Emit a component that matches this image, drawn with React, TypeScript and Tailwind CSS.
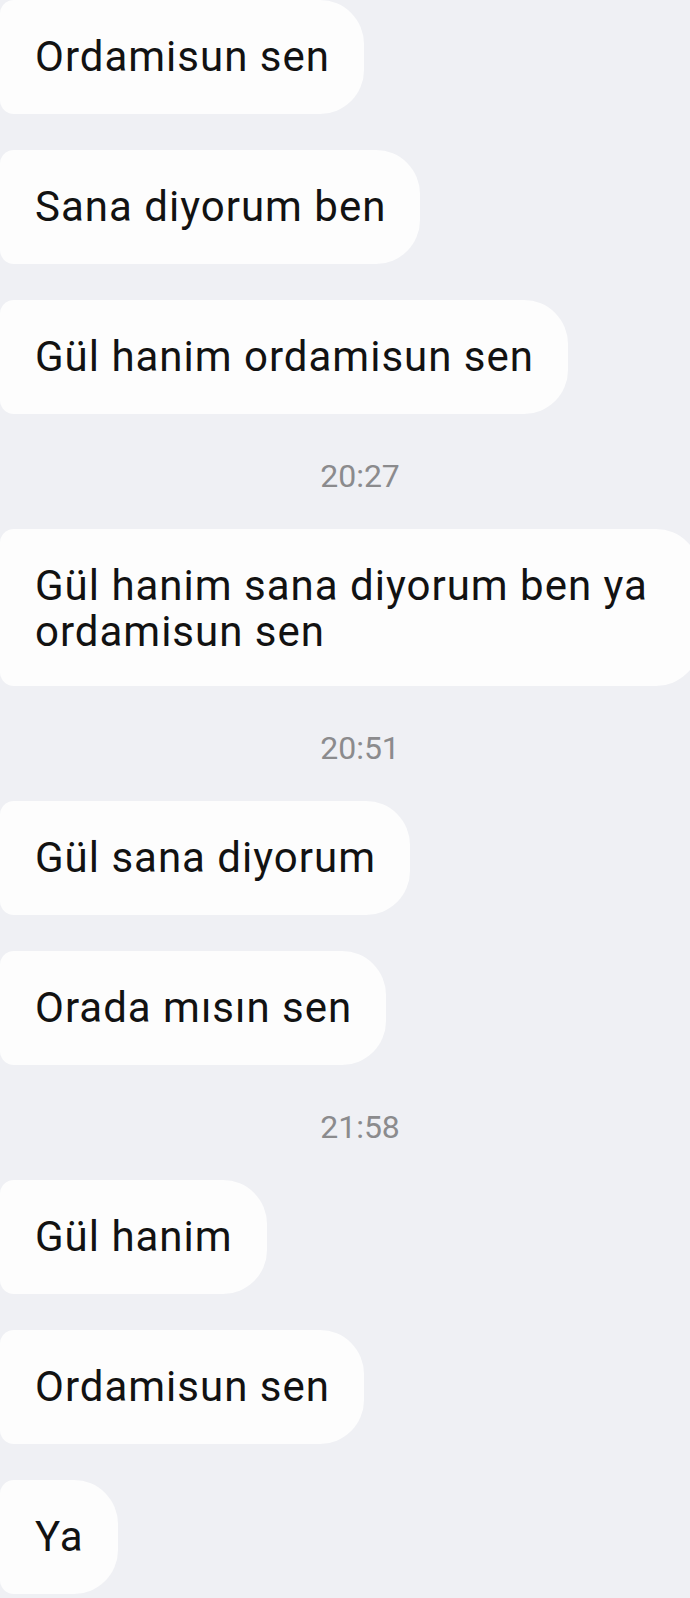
type Item = { kind: "msg"; text: string[] } | { kind: "time"; text: string };

const items: Item[] = [
  { kind: "msg", text: ["Ordamisun sen"] },
  { kind: "msg", text: ["Sana diyorum ben"] },
  { kind: "msg", text: ["Gül hanim ordamisun sen"] },
  { kind: "time", text: "20:27" },
  { kind: "msg", text: ["Gül hanim sana diyorum ben ya", "ordamisun sen"] },
  { kind: "time", text: "20:51" },
  { kind: "msg", text: ["Gül sana diyorum"] },
  { kind: "msg", text: ["Orada mısın sen"] },
  { kind: "time", text: "21:58" },
  { kind: "msg", text: ["Gül hanim"] },
  { kind: "msg", text: ["Ordamisun sen"] },
  { kind: "msg", text: ["Ya"] },
];

function Bubble({ lines }: { lines: string[] }) {
  const wide = lines.length > 1;
  return (
    <div
      className={
        wide
          ? "w-[700px] shrink-0 rounded-l-[14px] rounded-r-[44px] bg-[#fdfdfd] pl-[35px] pr-[34px] pt-[34px] pb-[31px]"
          : "w-fit rounded-l-[14px] rounded-r-[44px] bg-[#fdfdfd] pl-[35px] pr-[34px] pt-[34px] pb-[34px]"
      }
    >
      {lines.map((l, i) => (
        <div key={i} className="whitespace-nowrap text-[42px] leading-[46px] tracking-[1px] text-[#121212]">
          {l}
        </div>
      ))}
    </div>
  );
}

export default function App() {
  return (
    <div
      className="min-h-[1598px] w-full overflow-hidden bg-[#eff0f4]"
      style={{ fontFamily: "Roboto, 'Noto Sans', sans-serif" }}
    >
      <div className="flex flex-col">
        {items.map((item, i) => {
          if (item.kind === "time") {
            return (
              <div key={i} className="flex h-[115px] items-center justify-center pl-[30px] pt-[8px] text-[32px] text-[#8b8b8d]">
                {item.text}
              </div>
            );
          }
          const prev = items[i - 1];
          return (
            <div key={i} className={prev && prev.kind === "msg" ? "mt-[36px] flex" : "flex"}>
              <Bubble lines={item.text} />
            </div>
          );
        })}
      </div>
    </div>
  );
}
